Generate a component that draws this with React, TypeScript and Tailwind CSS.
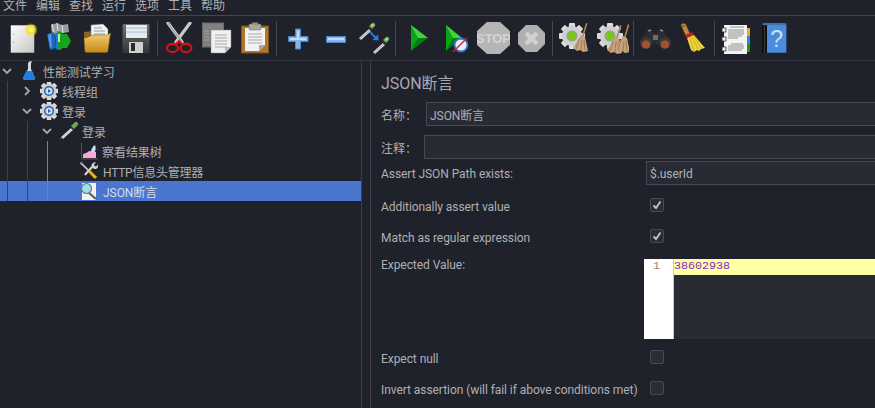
const FONT = "font-['Roboto','Noto_Sans_CJK_SC',sans-serif]";

type IconProps = { className?: string };

const Sep = ({ className = "" }: IconProps) => (
  <div className={`w-px h-[35px] -mt-[1px] bg-[#454851] ${className}`} />
);

const NewIcon = ({ className }: IconProps) => (
  <svg width="27" height="32" viewBox="0 0 27 32" className={className}>
    <defs>
      <linearGradient id="newA" x1="0" y1="0" x2="1" y2="1">
        <stop offset="0" stopColor="#ffffff" />
        <stop offset="1" stopColor="#c4c4c4" />
      </linearGradient>
      <radialGradient id="newB">
        <stop offset="0" stopColor="#ffff70" />
        <stop offset="0.5" stopColor="#f4e03a" />
        <stop offset="1" stopColor="#f4e03a" stopOpacity="0" />
      </radialGradient>
    </defs>
    <rect x="0.5" y="3" width="24" height="28" rx="1" fill="url(#newA)" stroke="#2a2a2a" strokeWidth="0.6" />
    <rect x="3" y="12" width="1" height="1" fill="#888" />
    <rect x="3" y="20" width="1" height="1" fill="#888" />
    <circle cx="21" cy="8" r="7" fill="url(#newB)" />
  </svg>
);

const TemplatesIcon = ({ className }: IconProps) => (
  <svg width="26" height="32" viewBox="0 0 26 32" className={className}>
    <path d="M5 3l6-2 5 2 6-1 1 8-17 3z" fill="#9b9b9b" />
    <path d="M6 2l2 9M11 1l1 9M16 3l1 8" stroke="#d9d9d9" strokeWidth="1.2" />
    <path d="M1 12l7-2 2 16-6 2z" fill="#1f63c4" />
    <path d="M2 13l3-1 1 13-2 1z" fill="#4f9be8" />
    <path d="M9 11l6 0 0 17-5-1z" fill="#1a79d6" />
    <path d="M11 9l5 1 0 17-5 1z" fill="#12a51c" />
    <rect x="12" y="12" width="2" height="8" fill="#b8f0b0" />
    <path d="M16 12h5l4 7-4 7h-5z" fill="#17a51d" />
  </svg>
);

const OpenIcon = ({ className }: IconProps) => (
  <svg width="30" height="32" viewBox="0 0 30 32" className={className}>
    <defs>
      <linearGradient id="openA" x1="0" y1="0" x2="0" y2="1">
        <stop offset="0" stopColor="#f6cf72" />
        <stop offset="1" stopColor="#c48a16" />
      </linearGradient>
    </defs>
    <path d="M1 10l8-1 1 3h6v5H1z" fill="#8a6420" />
    <path d="M8 3l12-1 5 5 0 11H8z" fill="#f2f2f2" stroke="#777" strokeWidth="0.5" />
    <path d="M11 6h8M11 9h11M11 12h11" stroke="#9a9a9a" strokeWidth="1" />
    <path d="M1 16c5 0 6-3 10-3l13 0 4-2-1 3-2 15c-.2 1-1 1.500-2 1.500H4c-1.500 0-2-.5-2.200-2z" fill="url(#openA)" stroke="#7d5a10" strokeWidth="0.5" />
  </svg>
);

const SaveIcon = ({ className }: IconProps) => (
  <svg width="29" height="32" viewBox="0 0 29 32" className={className}>
    <defs>
      <linearGradient id="saveA" x1="0" y1="0" x2="0" y2="1">
        <stop offset="0" stopColor="#6f6f6f" />
        <stop offset="1" stopColor="#343434" />
      </linearGradient>
    </defs>
    <rect x="0.500" y="2" width="27" height="29" rx="1.500" fill="url(#saveA)" />
    <rect x="4" y="3" width="21" height="13" fill="#e4ebf3" />
    <path d="M4 6h21M4 10h21" stroke="#a8c0da" strokeWidth="1" />
    <rect x="7" y="20" width="14" height="11" fill="#d0d0d0" />
    <rect x="9" y="21" width="4" height="8" fill="#2b2b2b" />
  </svg>
);

const CutIcon = ({ className }: IconProps) => (
  <svg width="29" height="32" viewBox="0 0 29 32" className={className}>
    <path d="M3 1l14 19M25 1L11 20" stroke="#c9c9c9" strokeWidth="3.200" strokeLinecap="round" />
    <path d="M3 1l14 19" stroke="#8e8e8e" strokeWidth="1" />
    <ellipse cx="7.500" cy="26" rx="5.500" ry="4.200" fill="none" stroke="#d41414" strokeWidth="2.200" />
    <ellipse cx="21" cy="26" rx="5.500" ry="4.200" fill="none" stroke="#d41414" strokeWidth="2.200" />
    <path d="M11 22l3-3 3 3" stroke="#d41414" strokeWidth="2" fill="none" />
  </svg>
);

const DocLines = ({ x, y, w, n, gap = 3 }: { x: number; y: number; w: number; n: number; gap?: number }) => (
  <path
    d={Array.from({ length: n }, (_, i) => `M${x} ${y + i * gap}h${w}`).join("")}
    stroke="#a9a9a9"
    strokeWidth="1"
  />
);

const CopyIcon = ({ className }: IconProps) => (
  <svg width="31" height="32" viewBox="0 0 31 32" className={className}>
    <rect x="0.500" y="1" width="21" height="24" fill="#808080" stroke="#6b6b6b" />
    <path d="M2 9h5M2 12h5M2 15h5M2 18h5" stroke="#a0a0a0" />
    <path d="M9 8h20v17l-6 6H9z" fill="#f0f0f0" stroke="#888" strokeWidth="0.500" />
    <path d="M23 31v-6h6z" fill="#b9b9b9" />
    <DocLines x={13} y={13} w={12} n={5} gap={3} />
  </svg>
);

const PasteIcon = ({ className }: IconProps) => (
  <svg width="28" height="32" viewBox="0 0 28 32" className={className}>
    <rect x="0.500" y="4" width="27" height="27" fill="#b0772d" stroke="#7e5219" />
    <path d="M4 6h20v17l-6 6H4z" fill="#f2f2f2" />
    <path d="M18 29v-6h6z" fill="#a5a5a5" />
    <rect x="8" y="2" width="12" height="6" rx="1" fill="#a9a9a0" stroke="#6e6e66" strokeWidth="0.500" />
    <rect x="11" y="0.500" width="6" height="2" fill="#8f8f86" />
    <DocLines x={7} y={12} w={14} n={4} gap={3} />
  </svg>
);

const PlusIcon = ({ className }: IconProps) => (
  <svg width="21" height="32" viewBox="0 0 21 32" className={className}>
    <path d="M7.500 7h5v7.500H20v5h-7.500V27h-5v-7.500H0.500v-5h7z" fill="#86b4e6" stroke="#4c86c9" strokeWidth="1" />
    <path d="M9 9h2v7h7v2h-7v0H9v0H2v-2h7z" fill="#c3dcf5" />
  </svg>
);

const MinusIcon = ({ className }: IconProps) => (
  <svg width="21" height="32" viewBox="0 0 21 32" className={className}>
    <rect x="0.500" y="14.500" width="19" height="6" fill="#86b4e6" stroke="#4c86c9" />
    <rect x="2" y="16" width="16" height="2" fill="#c3dcf5" />
  </svg>
);

const Pipette = ({ x = 0, y = 0 }: { x?: number; y?: number }) => (
  <g transform={`translate(${x} ${y})`}>
    <path d="M0 16l10-9 2 2-10 9z" fill="#dcdcdc" />
    <path d="M1 17l10-9" stroke="#8a8a8a" strokeWidth="0.700" />
    <path d="M9 6l3 3 1-1-3-3z" fill="#2d2d2d" />
    <path d="M10 4l3-3c2-1 4 1 3 3l-3 3z" fill="#6fa64f" />
    <path d="M12 3l2-1 1 1-2 2z" fill="#b5e39a" />
  </g>
);

const PipetteMoveIcon = ({ className }: IconProps) => (
  <svg width="32" height="32" viewBox="0 0 32 32" className={className}>
    <Pipette x={0} y={0} />
    <Pipette x={14} y={14} />
    <path d="M11 10l6 6" stroke="#2c7ce8" strokeWidth="1.800" />
    <path d="M19.500 18.500l-.5-6-5.500 5.500z" fill="#2c7ce8" />
  </svg>
);

const PlayIcon = ({ className }: IconProps) => (
  <svg width="19" height="32" viewBox="0 0 19 32" className={className}>
    <path d="M1 3l17 13H1z" fill="#3fd33f" />
    <path d="M1 29l17-13H1z" fill="#047a0f" />
    <path d="M1 3l7 13-7 13z" fill="#0ba416" />
  </svg>
);

const PlayNoTimerIcon = ({ className }: IconProps) => (
  <svg width="24" height="32" viewBox="0 0 24 32" className={className}>
    <path d="M1 3l16 13H1z" fill="#3fd33f" />
    <path d="M1 29l16-13H1z" fill="#047a0f" />
    <path d="M1 3l7 13-7 13z" fill="#0ba416" />
    <circle cx="16" cy="23" r="6.500" fill="#e8f0fa" stroke="#2f6fd0" strokeWidth="1.800" />
    <path d="M8 30l14-14" stroke="#e02020" strokeWidth="1.500" />
  </svg>
);

const StopIcon = ({ className }: IconProps) => (
  <svg width="33" height="32" viewBox="0 0 33 32" className={className}>
    <path d="M10 0h13l10 9v14l-10 9H10L0 23V9z" fill="#b5b5b5" />
    <text x="16.500" y="21" textAnchor="middle" fontFamily="Liberation Sans, sans-serif" fontWeight="700" fontSize="13" fill="#d4d4d4">STOP</text>
  </svg>
);

const XIcon = ({ className }: IconProps) => (
  <svg width="27" height="32" viewBox="0 0 27 32" className={className}>
    <path d="M8 3h11l8 8v11l-8 8H8l-8-8V11z" fill="#b0b0b0" />
    <path d="M8 11l11 11M19 11L8 22" stroke="#d0d0d0" strokeWidth="4.500" />
  </svg>
);

const Gear = ({ cx, cy, r }: { cx: number; cy: number; r: number }) => (
  <g>
    {[0, 45, 90, 135].map((a) => (
      <rect
        key={a}
        x={cx - r * 0.28}
        y={cy - r * 1.18}
        width={r * 0.56}
        height={r * 2.36}
        rx={r * 0.1}
        fill="#dcdcdc"
        transform={`rotate(${a} ${cx} ${cy})`}
      />
    ))}
    <circle cx={cx} cy={cy} r={r * 0.92} fill="#cfcfcf" />
  </g>
);

const Broom = ({ x = 0, y = 0 }: { x?: number; y?: number }) => (
  <g transform={`translate(${x} ${y})`}>
    <path d="M14 0l1.500 .6-4 13-1.500-.6z" fill="#b38557" />
    <path d="M9 12l4 2 3 14-5 1-3-2-3 1-4-3z" fill="#c6a27c" />
    <path d="M7 16l-3 10M10 17l-1 11M12 17l1 10" stroke="#8c6a48" strokeWidth="0.700" />
  </g>
);

const GearBroomIcon = ({ className }: IconProps) => (
  <svg width="30" height="32" viewBox="0 0 30 32" className={className}>
    <Gear cx={13} cy={14} r={11} />
    <circle cx="13" cy="14" r="5.500" fill="#9a9a9a" />
    <circle cx="13" cy="14" r="4.500" fill="#76c81e" />
    <Broom x={13} y={1} />
  </svg>
);

const GearBroomsIcon = ({ className }: IconProps) => (
  <svg width="32" height="32" viewBox="0 0 32 32" className={className}>
    <Gear cx={13} cy={14} r={11} />
    <circle cx="13" cy="14" r="5.500" fill="#9a9a9a" />
    <circle cx="13" cy="14" r="4.500" fill="#76c81e" />
    <Broom x={9} y={3} />
    <Broom x={17} y={2} />
  </svg>
);

const BinocularsIcon = ({ className }: IconProps) => (
  <svg width="31" height="32" viewBox="0 0 31 32" className={className}>
    <path d="M7 8l5-1 2 5h3l2-5 5 1 7 14H0z" fill="#2c2c2e" />
    <path d="M8 9l3-1M20 8l3 1" stroke="#8a8a8a" strokeWidth="1.500" />
    <rect x="13" y="13" width="5" height="5" fill="#6c6c6c" />
    <circle cx="6" cy="21" r="6" fill="#3a3a3a" />
    <circle cx="25" cy="21" r="6" fill="#3a3a3a" />
    <circle cx="6" cy="22.500" r="4" fill="#a4522a" />
    <circle cx="25" cy="22.500" r="4" fill="#a4522a" />
  </svg>
);

const BroomYellowIcon = ({ className }: IconProps) => (
  <svg width="27" height="32" viewBox="0 0 27 32" className={className}>
    <path d="M1 3c1-2 4-2 5 0l4 9-4 2z" fill="#c08b3a" stroke="#7a5518" strokeWidth="0.500" />
    <circle cx="3.500" cy="4" r="1" fill="#6b4a12" />
    <path d="M5 13l7-3 2 3-7 3z" fill="#c81e1e" />
    <path d="M7 16l7-3 11 13-4 1-2 2-2-1-3 2-3-2z" fill="#f0d43a" />
    <path d="M10 16l4 13M12 15l6 12M14 14l7 12" stroke="#b8982a" strokeWidth="0.700" />
  </svg>
);

const LogIcon = ({ className }: IconProps) => (
  <svg width="29" height="32" viewBox="0 0 29 32" className={className}>
    <rect x="24" y="6" width="4" height="8" fill="#e8b010" />
    <rect x="24" y="14" width="4" height="8" fill="#3c7fe0" />
    <rect x="24" y="22" width="4" height="8" fill="#1a9a1a" />
    <rect x="2" y="3" width="23" height="29" fill="#f4f4f4" />
    <rect x="0" y="6" width="4" height="4" fill="#f0f0f0" stroke="#222" strokeWidth="0.700" />
    <rect x="0" y="15" width="4" height="4" fill="#f0f0f0" stroke="#222" strokeWidth="0.700" />
    <rect x="0" y="25" width="4" height="4" fill="#f0f0f0" stroke="#222" strokeWidth="0.700" />
    <path d="M8 5h14M6 8h16M6 10h16M6 12h16M6 14h14M6 16h10M9 22h12M6 24h16M6 26h16M6 28h14" stroke="#777" strokeWidth="0.800" />
  </svg>
);

const HelpIcon = ({ className }: IconProps) => (
  <svg width="25" height="32" viewBox="0 0 25 32" className={className}>
    <rect x="0.500" y="1" width="24" height="30" rx="1.500" fill="#3f6fb5" />
    <rect x="0" y="3" width="5" height="28" fill="#111" />
    <rect x="2" y="3" width="1" height="28" fill="#3a3a3a" />
    <rect x="5" y="3" width="19" height="27" rx="1" fill="#4a8bdc" />
    <text x="14.500" y="25" textAnchor="middle" fontFamily="Liberation Sans, sans-serif" fontSize="23" fill="#cfe0f5">?</text>
  </svg>
);

const FlaskIcon = () => (
  <svg width="12" height="20" viewBox="0 0 12 20" className="shrink-0">
    <path d="M7 0l2.500 1L8 2v6l3.500 8c.5 1.500 0 3-1 3H2c-1.500 0-2-1.500-1.500-3L5 8V2z" fill="#cfd6de" />
    <path d="M3 10h6l2.500 6c.5 1.500 0 3-1 3H2c-1.500 0-2-1.500-1.500-3z" fill="#1f7fe0" />
  </svg>
);

const TreeGearIcon = () => (
  <svg width="18" height="18" viewBox="0 0 18 18" className="shrink-0">
    <Gear cx={9} cy={9} r={8} />
    <circle cx="9" cy="9" r="5" fill="#2a5ea8" />
    <circle cx="9" cy="9" r="3.500" fill="#cfe0f5" />
    <path d="M8 7l3 2-3 2z" fill="#2a5ea8" />
  </svg>
);

const TreePipetteIcon = () => (
  <svg width="19" height="18" viewBox="0 0 19 18" className="shrink-0">
    <path d="M1 15l10-9 2 2-10 9z" fill="#d0d0d0" />
    <path d="M10 5l2 2 1-1-2-2z" fill="#222" />
    <path d="M11 4l4-4c2-.5 4 1.500 3 3l-4 4z" fill="#6fa64f" />
    <path d="M1 15l-1 2 1 1z" fill="#555" />
  </svg>
);

const ResultTreeIcon = () => (
  <svg width="17" height="18" viewBox="0 0 17 18" className="shrink-0">
    <path d="M0.500 1v16H17" stroke="#555" fill="none" />
    <path d="M2 16v-4c2-1 4-1 6-3l7 1v6z" fill="#f7a8d8" />
    <path d="M10 10c0-3 2-6 4-7 1 2 1 6-1 8z" fill="#c9dcf5" />
  </svg>
);

const ToolsIcon = () => (
  <svg width="18" height="18" viewBox="0 0 18 18" className="shrink-0">
    <path d="M13 4L2 16" stroke="#d4d4d4" strokeWidth="2.200" />
    <path d="M5 13L1.500 16.500" stroke="#1a1a1a" strokeWidth="2.600" />
    <path d="M11.500 3.500A3.500 3.500 0 0 1 16 .5l-2 2 .5 1.500 1.500 .5 2-2A3.500 3.500 0 0 1 14 7z" fill="#d4d4d4" />
    <path d="M1 1l8 8" stroke="#d8d8d8" strokeWidth="1.600" />
    <path d="M9 9l7 7" stroke="#e8b020" strokeWidth="3" />
    <path d="M0 0l3 .5L.5 3z" fill="#8a8a8a" />
  </svg>
);

const AssertIcon = () => (
  <svg width="19" height="18" viewBox="0 0 19 18" className="shrink-0">
    <rect x="2" y="1" width="14" height="17" fill="#f2f2f2" />
    <path d="M9 11l7 6" stroke="#5a5a5a" strokeWidth="2.200" />
    <circle cx="6.500" cy="6.500" r="5" fill="#9fe0ee" stroke="#6b7a8a" strokeWidth="1.200" />
  </svg>
);

const Chevron = ({ open, className = "" }: { open: boolean; className?: string }) => (
  <svg width="10" height="10" viewBox="0 0 10 10" className={`shrink-0 ${className}`}>
    <path
      d={open ? "M1 3l4 4 4-4" : "M3 1l4 4-4 4"}
      fill="none"
      stroke="#a4a7ad"
      strokeWidth="1.800"
    />
  </svg>
);

const MENU = ["文件", "编辑", "查找", "运行", "选项", "工具", "帮助"];

const Check = ({ checked = false }: { checked?: boolean }) => (
  <div className="w-[14px] h-[14px] ml-[5px] shrink-0 rounded-[2px] border border-[#474a52] bg-[#2a2d36] flex items-center justify-center">
    {checked && (
      <svg width="10" height="10" viewBox="0 0 10 10">
        <path d="M1.500 5.500L4 8l4.500-6.500" fill="none" stroke="#c4c6ca" strokeWidth="1.800" />
      </svg>
    )}
  </div>
);

const CheckRow = ({ label, checked, className = "" }: { label: string; checked?: boolean; className?: string }) => (
  <div className={`flex h-[14px] ${className}`}>
    <span className="w-[264px] shrink-0 whitespace-nowrap leading-[18px]">{label}</span>
    <Check checked={checked} />
  </div>
);

const Row = ({ pl, children, selected }: { pl: string; children: React.ReactNode; selected?: boolean }) => (
  <div className={`h-5 flex items-center whitespace-nowrap ${pl} ${selected ? "bg-[#4a76cf] text-[#d5dcec]" : ""}`}>
    {children}
  </div>
);

export default function App() {
  return (
    <div className={`${FONT} w-[875px] h-[408px] overflow-hidden bg-[#1f222b] text-[#aeb0b4] text-[12px] leading-none tracking-[-0.06px] flex flex-col`}>
      {/* menu bar */}
      <div className="h-4 shrink-0 border-b border-[#43464e] flex items-end pl-[3px] gap-[9px] overflow-hidden tracking-normal">
        {MENU.map((m) => (
          <span key={m} className="pb-[3px] leading-[12px]">{m}</span>
        ))}
      </div>

      {/* toolbar */}
      <div className="h-[44px] shrink-0 flex items-start pt-[6px] pl-[10px]">
        <NewIcon />
        <TemplatesIcon className="ml-[9px]" />
        <OpenIcon className="ml-[11px]" />
        <SaveIcon className="ml-[9px]" />
        <Sep className="ml-[6px]" />
        <CutIcon className="ml-[7px]" />
        <CopyIcon className="ml-[8px]" />
        <PasteIcon className="ml-[8px]" />
        <Sep className="ml-[7px]" />
        <PlusIcon className="ml-[11px]" />
        <MinusIcon className="ml-[17px]" />
        <PipetteMoveIcon className="ml-[12px]" />
        <Sep className="ml-[4px]" />
        <PlayIcon className="ml-[14px]" />
        <PlayNoTimerIcon className="ml-[16px]" />
        <StopIcon className="ml-[8px]" />
        <XIcon className="ml-[8px]" />
        <Sep className="ml-[7px]" />
        <GearBroomIcon className="ml-[6px]" />
        <GearBroomsIcon className="ml-[8px]" />
        <Sep className="ml-[4px]" />
        <BinocularsIcon className="ml-[6px]" />
        <BroomYellowIcon className="ml-[9px]" />
        <Sep className="ml-[7px]" />
        <LogIcon className="ml-[7px]" />
        <HelpIcon className="ml-[11px]" />
      </div>

      <div className="flex-1 flex min-h-0 border-t border-[#33363e]">
        {/* tree */}
        <div className="w-[361px] shrink-0 relative">
          <Row pl="pl-[2px]">
            <Chevron open />
            <span className="w-[11px]" />
            <FlaskIcon />
            <span className="ml-[8px] pt-[4px]">性能测试学习</span>
          </Row>
          <Row pl="pl-[22px]">
            <Chevron open={false} />
            <span className="w-[8px]" />
            <TreeGearIcon />
            <span className="ml-[4px] pt-[4px]">线程组</span>
          </Row>
          <Row pl="pl-[22px]">
            <Chevron open />
            <span className="w-[8px]" />
            <TreeGearIcon />
            <span className="ml-[4px] pt-[4px]">登录</span>
          </Row>
          <Row pl="pl-[42px]">
            <Chevron open />
            <span className="w-[8px]" />
            <TreePipetteIcon />
            <span className="ml-[3px] pt-[4px]">登录</span>
          </Row>
          <Row pl="pl-[81px]">
            <ResultTreeIcon />
            <span className="ml-[4px] pt-[4px]">察看结果树</span>
          </Row>
          <Row pl="pl-[80px]">
            <ToolsIcon />
            <span className="ml-[5px] pt-[4px] tracking-[-0.25px]">HTTP信息头管理器</span>
          </Row>
          <Row pl="pl-[80px]" selected>
            <AssertIcon />
            <span className="ml-[4px] pt-[4px]">JSON断言</span>
          </Row>
          {/* guide lines */}
          <div className="absolute left-[7px] top-[20px] w-px h-[120px] bg-[#3f424a]" />
          <div className="absolute left-[27px] top-[60px] w-px h-[80px] bg-[#3f424a]" />
          <div className="absolute left-[47px] top-[80px] w-px h-[60px] bg-[#5f83c8]" />
        </div>

        {/* divider */}
        <div className="w-[10px] shrink-0 border-x border-[#3c3f47] h-full" />

        {/* assertion panel */}
        <div className="flex-1 min-w-0 pl-[10px] flex flex-col">
          <div className="text-[16px] leading-[20px] mt-[13px] text-[#a7a9ae]">JSON断言</div>
          <div className="flex items-center mt-[8px]">
            <span className="w-[45px] shrink-0 pt-[4px]">名称：</span>
            <div className="flex-1 h-[24px] border border-r-0 border-[#474a52] bg-[#282b34] flex items-center pl-[3px] pt-[3px]">JSON断言</div>
          </div>
          <div className="flex items-center mt-[9px]">
            <span className="w-[43px] shrink-0 pt-[4px]">注释：</span>
            <div className="flex-1 h-[24px] border border-r-0 border-[#474a52] bg-[#282b34]" />
          </div>
          <div className="flex items-center mt-[2px]">
            <span className="w-[265px] shrink-0 whitespace-nowrap pt-[2px]">Assert JSON Path exists:</span>
            <div className="flex-1 h-[24px] border border-r-0 border-[#474a52] bg-[#282b34] flex items-center pl-[3px] pt-[2px]">$.userId</div>
          </div>
          <CheckRow label="Additionally assert value" checked className="mt-[13px]" />
          <CheckRow label="Match as regular expression" checked className="mt-[17px]" />
          <div className="flex mt-[16px]">
            <span className="w-[263px] shrink-0">Expected Value:</span>
            <div className="flex-1 h-[80px] flex min-w-0 tracking-normal">
              <div className="w-[30px] shrink-0 bg-white border-r border-[#c8c8c8] text-right pr-[13px] pt-[2px] text-[#a0806e] font-['Liberation_Mono',monospace] text-[11.7px]">1</div>
              <div className="flex-1 bg-[#282b34]">
                <div className="h-[16px] bg-[#ffffa3] text-[#8a1fd0] font-['Liberation_Mono',monospace] text-[11.7px] leading-[14px]">38602938</div>
              </div>
            </div>
          </div>
          <CheckRow label="Expect null" className="mt-[11px]" />
          <CheckRow label="Invert assertion (will fail if above conditions met)" className="mt-[17px]" />
        </div>
      </div>
    </div>
  );
}
